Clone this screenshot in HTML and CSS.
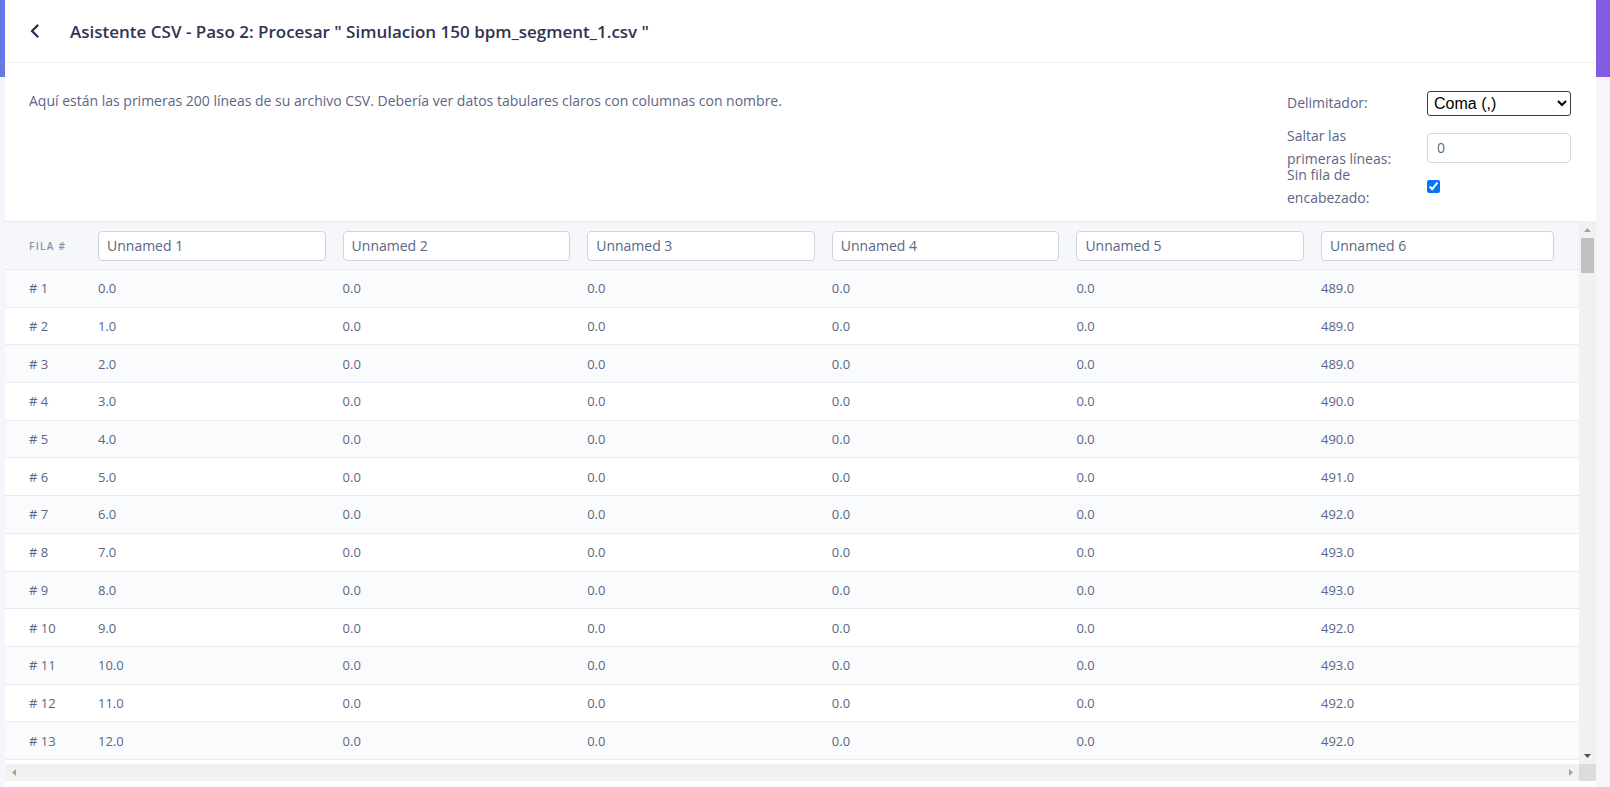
FILE: index.html
```html
<!DOCTYPE html>
<html lang="es">
<head>
<meta charset="utf-8">
<title>Asistente CSV</title>
<link rel="stylesheet" href="styles.css">
</head>
<body>
<div class="modal">
  <header class="modal-header">
    <button class="back" type="button" aria-label="Volver">
      <svg width="14" height="14" viewBox="0 0 14 14"><path d="M9.5 1.5L4 7l5.5 5.5" fill="none" stroke="#2b3150" stroke-width="2.4" stroke-linecap="round" stroke-linejoin="round"/></svg>
    </button>
    <h1 class="title">Asistente CSV - Paso 2: Procesar " Simulacion 150 bpm_segment_1.csv "</h1>
  </header>
  <section class="intro">
    <p class="desc">Aquí están las primeras 200 líneas de su archivo CSV. Debería ver datos tabulares claros con columnas con nombre.</p>
    <div class="options">
      <div class="opt opt-delim">
        <label class="opt-label">Delimitador:</label>
        <select class="delim"><option>Coma (,)</option></select>
      </div>
      <div class="opt opt-skip">
        <label class="opt-label">Saltar las primeras líneas:</label>
        <input class="num" type="text" value="0">
      </div>
      <div class="opt opt-head">
        <label class="opt-label">Sin fila de encabezado:</label>
        <input class="check" type="checkbox" checked>
      </div>
    </div>
  </section>
  <div class="grid-wrap">
    <div class="viewport">
      <div class="grid">
        <div class="row head">
          <div class="c idx hcap">FILA #</div>
          <div class="c"><input class="colname" value="Unnamed 1"></div>
          <div class="c"><input class="colname" value="Unnamed 2"></div>
          <div class="c"><input class="colname" value="Unnamed 3"></div>
          <div class="c"><input class="colname" value="Unnamed 4"></div>
          <div class="c"><input class="colname" value="Unnamed 5"></div>
          <div class="c last"><input class="colname" value="Unnamed 6"></div>
        </div>
        <div class="row"><div class="c idx"># 1</div><div class="c">0.0</div><div class="c">0.0</div><div class="c">0.0</div><div class="c">0.0</div><div class="c">0.0</div><div class="c last">489.0</div></div>
        <div class="row"><div class="c idx"># 2</div><div class="c">1.0</div><div class="c">0.0</div><div class="c">0.0</div><div class="c">0.0</div><div class="c">0.0</div><div class="c last">489.0</div></div>
        <div class="row"><div class="c idx"># 3</div><div class="c">2.0</div><div class="c">0.0</div><div class="c">0.0</div><div class="c">0.0</div><div class="c">0.0</div><div class="c last">489.0</div></div>
        <div class="row"><div class="c idx"># 4</div><div class="c">3.0</div><div class="c">0.0</div><div class="c">0.0</div><div class="c">0.0</div><div class="c">0.0</div><div class="c last">490.0</div></div>
        <div class="row"><div class="c idx"># 5</div><div class="c">4.0</div><div class="c">0.0</div><div class="c">0.0</div><div class="c">0.0</div><div class="c">0.0</div><div class="c last">490.0</div></div>
        <div class="row"><div class="c idx"># 6</div><div class="c">5.0</div><div class="c">0.0</div><div class="c">0.0</div><div class="c">0.0</div><div class="c">0.0</div><div class="c last">491.0</div></div>
        <div class="row"><div class="c idx"># 7</div><div class="c">6.0</div><div class="c">0.0</div><div class="c">0.0</div><div class="c">0.0</div><div class="c">0.0</div><div class="c last">492.0</div></div>
        <div class="row"><div class="c idx"># 8</div><div class="c">7.0</div><div class="c">0.0</div><div class="c">0.0</div><div class="c">0.0</div><div class="c">0.0</div><div class="c last">493.0</div></div>
        <div class="row"><div class="c idx"># 9</div><div class="c">8.0</div><div class="c">0.0</div><div class="c">0.0</div><div class="c">0.0</div><div class="c">0.0</div><div class="c last">493.0</div></div>
        <div class="row"><div class="c idx"># 10</div><div class="c">9.0</div><div class="c">0.0</div><div class="c">0.0</div><div class="c">0.0</div><div class="c">0.0</div><div class="c last">492.0</div></div>
        <div class="row"><div class="c idx"># 11</div><div class="c">10.0</div><div class="c">0.0</div><div class="c">0.0</div><div class="c">0.0</div><div class="c">0.0</div><div class="c last">493.0</div></div>
        <div class="row"><div class="c idx"># 12</div><div class="c">11.0</div><div class="c">0.0</div><div class="c">0.0</div><div class="c">0.0</div><div class="c">0.0</div><div class="c last">492.0</div></div>
        <div class="row"><div class="c idx"># 13</div><div class="c">12.0</div><div class="c">0.0</div><div class="c">0.0</div><div class="c">0.0</div><div class="c">0.0</div><div class="c last">492.0</div></div>
      </div>
    </div>
    <div class="vbar">
      <div class="sb-btn"><svg width="7" height="4" viewBox="0 0 7 4"><path d="M0 4L3.5 0 7 4z" fill="#a3a3a3"/></svg></div>
      <div class="vthumb"></div>
      <div class="sb-track"></div>
      <div class="sb-btn"><svg width="7" height="4" viewBox="0 0 7 4"><path d="M0 0L3.5 4 7 0z" fill="#505050"/></svg></div>
    </div>
    <div class="hbar">
      <div class="sb-btn"><svg width="4" height="7" viewBox="0 0 4 7"><path d="M4 0L0 3.5 4 7z" fill="#a3a3a3"/></svg></div>
      <div class="sb-track"></div>
      <div class="sb-btn"><svg width="4" height="7" viewBox="0 0 4 7"><path d="M0 0L4 3.5 0 7z" fill="#a3a3a3"/></svg></div>
    </div>
    <div class="corner"></div>
  </div>
</div>
</body>
</html>
```
FILE: styles.css
```css
html, body {
  margin: 0;
  height: 787px;
  overflow: hidden;
}
body {
  background: linear-gradient(90deg, #6678e4, #835de0) top left / 100% 77px no-repeat, #f5f6fc;
  font-family: "Open Sans", "Noto Sans", sans-serif;
  color: #5b6685;
}
.modal {
  margin-left: 5px;
  width: 1591px;
  height: 787px;
  background: #fff;
  display: flex;
  flex-direction: column;
}
.modal-header {
  height: 62px;
  border-bottom: 1px solid #eef0f4;
  display: flex;
  align-items: center;
  padding-left: 23px;
  flex: none;
}
.back {
  border: 0;
  background: none;
  padding: 0;
  width: 42px;
  height: 24px;
  display: flex;
  align-items: center;
  cursor: pointer;
}
.title {
  margin: 0;
  font-size: 17px;
  font-weight: 600;
  color: #2f3453;
}
.intro {
  height: 158px;
  flex: none;
  display: flex;
  justify-content: space-between;
  padding: 0 25px 0 24px;
  box-sizing: border-box;
}
.desc {
  margin: 27px 0 0;
  font-size: 14px;
  line-height: 21px;
  color: #5b6685;
}
.options {
  margin-top: 28px;
  width: 284px;
}
.opt {
  display: flex;
  align-items: center;
}
.opt-label {
  width: 120px;
  margin-right: 20px;
  font-size: 14px;
  line-height: 22.5px;
  color: #5b6685;
}
.opt-delim { height: 25px; }
.opt-skip { margin-top: 9px; height: 45px; }
.opt-head { margin-top: -6px; height: 45px; }
.delim {
  width: 144px;
  height: 25px;
  font-family: "Liberation Sans", Arial, sans-serif;
  font-size: 16px;
  color: #000;
  border: 1px solid #3b3b3b;
  border-radius: 3px;
  background: #fff;
  padding: 0 2px;
}
.num {
  width: 144px;
  height: 30px;
  box-sizing: border-box;
  border: 1px solid #d3d8e0;
  border-radius: 4px;
  padding: 0 9px;
  font-family: "Open Sans", sans-serif;
  font-size: 14px;
  color: #5b6685;
  outline: none;
}
.check {
  margin: 0;
  width: 13px;
  height: 13px;
}

/* grid with drawn scrollbars */
.grid-wrap {
  height: 560px;
  flex: none;
  display: grid;
  grid-template-columns: 1fr 17px;
  grid-template-rows: 1fr 17px;
}
.viewport {
  overflow: hidden;
  min-width: 0;
  min-height: 0;
}
.row {
  display: flex;
  align-items: center;
  height: 37.7px;
  box-sizing: border-box;
  border-bottom: 1px solid #e8ebf0;
  font-size: 13px;
  color: #5b6685;
}
.row:nth-child(even) {
  background: #fafbfd;
}
.row.head {
  height: 49px;
  background: #f5f7fa;
  border-top: 1px solid #e6e9ef;
  border-bottom: 1px solid #e6e9ef;
}
.c {
  flex: none;
  width: 244.6px;
  padding-right: 17px;
  box-sizing: border-box;
}
.c.idx {
  width: 93px;
  padding-left: 24px;
}
.c.last {
  width: 257px;
  padding-right: 24px;
}
.hcap {
  font-size: 10px;
  font-weight: 600;
  letter-spacing: 1.3px;
  color: #8a93a7;
}
.colname {
  width: 100%;
  height: 30px;
  box-sizing: border-box;
  border: 1px solid #cfd5de;
  border-radius: 4px;
  padding: 0 8px;
  font-family: "Open Sans", sans-serif;
  font-size: 14px;
  color: #5b6685;
  background: #fff;
  outline: none;
}
.vbar {
  display: flex;
  flex-direction: column;
  background: #f1f1f1;
}
.hbar {
  display: flex;
  background: #f1f1f1;
}
.sb-btn {
  width: 17px;
  height: 17px;
  flex: none;
  display: flex;
  align-items: center;
  justify-content: center;
}
.sb-track {
  flex: 1;
}
.vthumb {
  flex: none;
  height: 35px;
  margin: 0 2px;
  background: #c1c1c1;
}
.corner {
  background: #dcdcdc;
}
```
